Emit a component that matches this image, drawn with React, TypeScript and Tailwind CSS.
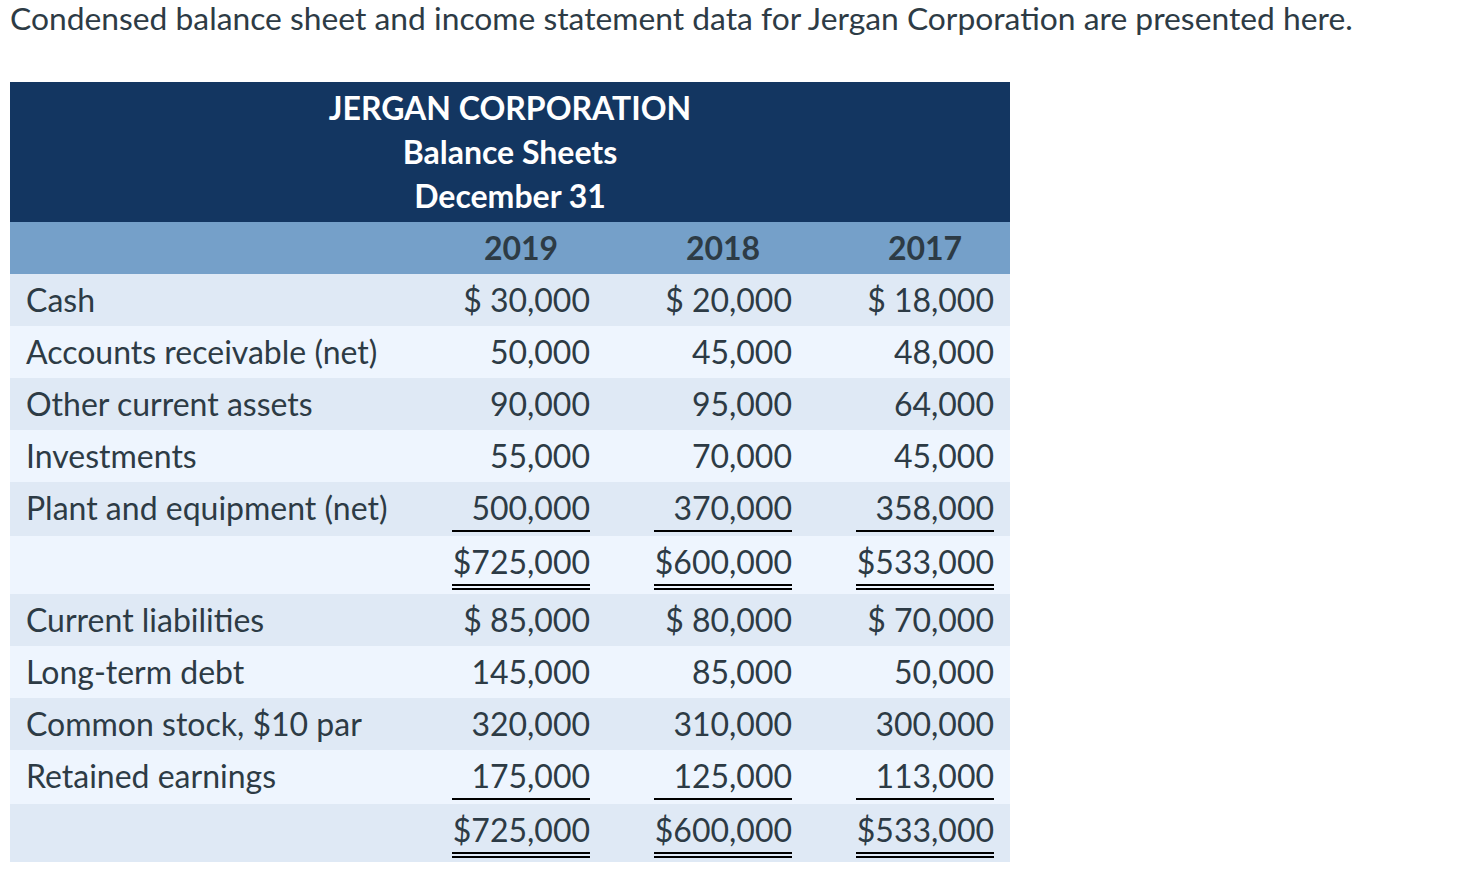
import React from "react";

type Row = {
  label: string;
  values: string[];
  rule?: "single" | "double";
};

const rows: Row[] = [
  { label: "Cash", values: ["$ 30,000", "$ 20,000", "$ 18,000"] },
  { label: "Accounts receivable (net)", values: ["50,000", "45,000", "48,000"] },
  { label: "Other current assets", values: ["90,000", "95,000", "64,000"] },
  { label: "Investments", values: ["55,000", "70,000", "45,000"] },
  { label: "Plant and equipment (net)", values: ["500,000", "370,000", "358,000"], rule: "single" },
  { label: "", values: ["$725,000", "$600,000", "$533,000"], rule: "double" },
  { label: "Current liabilities", values: ["$ 85,000", "$ 80,000", "$ 70,000"] },
  { label: "Long-term debt", values: ["145,000", "85,000", "50,000"] },
  { label: "Common stock, $10 par", values: ["320,000", "310,000", "300,000"] },
  { label: "Retained earnings", values: ["175,000", "125,000", "113,000"], rule: "single" },
  { label: "", values: ["$725,000", "$600,000", "$533,000"], rule: "double" },
];

const years = ["2019", "2018", "2017"];

const ruleClass = (rule?: "single" | "double") => {
  if (rule === "single") return "border-b-2 border-black";
  if (rule === "double") return "border-b-[6px] border-double border-black";
  return "";
};

export default function App() {
  return (
    <div className="min-h-screen bg-white px-[10px] font-['Lato',sans-serif] text-[#2d3b45]">
      <p className="text-[31.8px] leading-[36px]">
        Condensed balance sheet and income statement data for Jergan Corporation are presented here.
      </p>
      <div className="mt-[46px] w-[1000px]">
        <div className="flex flex-col items-center bg-[#133661] py-1 text-[32px] font-bold leading-[44px] text-white">
          <div>JERGAN CORPORATION</div>
          <div>Balance Sheets</div>
          <div>December 31</div>
        </div>
        <div className="flex bg-[#75a0c9] py-1 text-[32px] font-bold leading-[44px]">
          <div className="w-[394px]" />
          {years.map((y) => (
            <div key={y} className="flex w-[202px] justify-end pr-4">
              <div className="w-[138px] text-center">{y}</div>
            </div>
          ))}
        </div>
        {rows.map((r, i) => (
          <div
            key={i}
            className={`flex items-start py-1 text-[32px] leading-[44px] ${
              i % 2 === 0 ? "bg-[#dfe9f5]" : "bg-[#eef5fe]"
            }`}
          >
            <div className="w-[394px] pl-4">{r.label}</div>
            {r.values.map((v, j) => (
              <div key={j} className="flex w-[202px] justify-end pr-4">
                <div className={`w-[138px] text-right ${ruleClass(r.rule)}`}>{v}</div>
              </div>
            ))}
          </div>
        ))}
      </div>
    </div>
  );
}
